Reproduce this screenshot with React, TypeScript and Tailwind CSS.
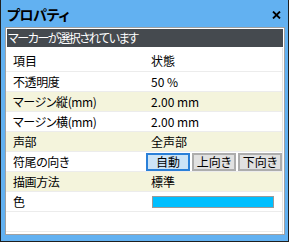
import React from 'react';

const rows: { label: string; value?: string; kind?: 'text' | 'buttons' | 'color'; beige?: boolean }[] = [
  { label: '不透明度', value: '50 %' },
  { label: 'マージン縦(mm)', value: '2.00 mm', beige: true },
  { label: 'マージン横(mm)', value: '2.00 mm' },
  { label: '声部', value: '全声部', beige: true },
  { label: '符尾の向き', kind: 'buttons' },
  { label: '描画方法', value: '標準', beige: true },
  { label: '色', kind: 'color' },
  { label: '' },
];

const font = "font-['Noto_Sans_CJK_JP',sans-serif] [font-feature-settings:'palt']";

export default function App() {
  return (
    <div className={`w-[289px] h-[242px] flex flex-col bg-[#62b1f1] border-x border-b border-[#1f1f1f] text-black ${font}`}>
      <div className="h-[27px] flex items-center justify-between pl-[6px] pr-[7px]">
        <span className="text-[14px] font-bold leading-none tracking-[-0.5px] mt-[1px]">プロパティ</span>
        <svg width="9" height="8" viewBox="0 0 9 8" className="mt-[3px]">
          <path d="M1 0.5 L8 7.5 M8 0.5 L1 7.5" stroke="#000" strokeWidth="1.8" />
        </svg>
      </div>
      <div className="flex-1 flex flex-col ml-[4px] mr-[3px] mb-[6px] bg-white border border-[#a0a0a0]">
        <div className="h-[20px] border border-white bg-[#454a4f] text-white text-[12px] leading-none tracking-[-1.4px] flex items-center pl-[1px]">
          マーカーが選択されています
        </div>
        <div className="flex-1 flex flex-col mr-[1px] border-r border-[#e4e4e4]">
          <div className="h-[24px] flex items-end pb-[4px] text-[12px] leading-none border-b border-[#ececec]">
            <span className="w-[140px] pl-[7px]">項目</span>
            <span className="pl-[5px]">状態</span>
          </div>
          {rows.map((r, i) => (
            <div
              key={i}
              className={`h-[20px] flex items-center text-[12px] leading-none border-b border-[#ececec] ${r.beige ? 'bg-[#f4f4dc]' : 'bg-white'}`}
            >
              <span className="w-[140px] pl-[7px] tracking-[-0.4px]">{r.label}</span>
              {r.kind === 'buttons' ? (
                <div className="flex gap-[2px] pt-[1px]">
                  <div className="w-[44px] h-[18px] flex items-center justify-center bg-[#cce4f7] border-2 border-[#2a80d8]">自動</div>
                  <div className="w-[44px] h-[18px] flex items-center justify-center bg-[#e1e1e1] border-2 border-[#adadad]">上向き</div>
                  <div className="w-[44px] h-[18px] flex items-center justify-center bg-[#e1e1e1] border-2 border-[#adadad]">下向き</div>
                </div>
              ) : r.kind === 'color' ? (
                <div className="ml-[6px] w-[122px] h-[12px] bg-[#00bfff] border border-[#9a9a9a]" />
              ) : (
                <span className="pl-[5px]">{r.value}</span>
              )}
            </div>
          ))}
        </div>
      </div>
    </div>
  );
}
